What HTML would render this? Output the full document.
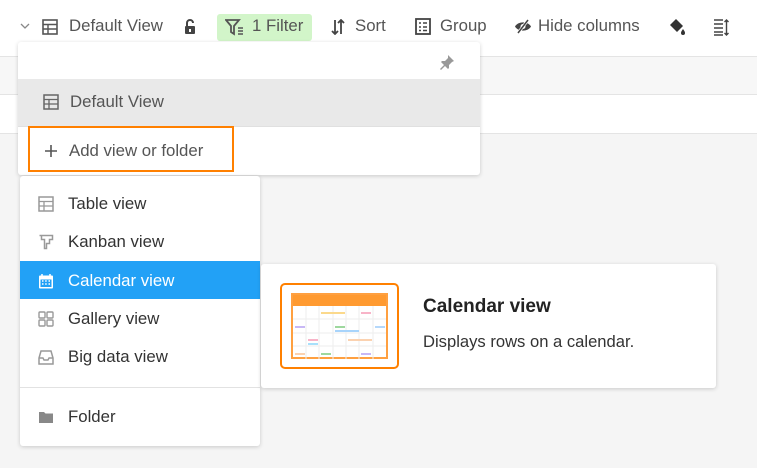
<!DOCTYPE html>
<html><head><meta charset="utf-8"><style>
*{box-sizing:border-box;margin:0;padding:0}
body{width:757px;height:468px;overflow:hidden;background:#f5f5f5;font-family:"Liberation Sans",sans-serif;position:relative;color:#333}
.abs{position:absolute}
.tb{top:0;left:0;width:757px;height:57px;background:#fff;border-bottom:1px solid #e4e4e4}
.t{position:absolute;top:16px;font-size:16.8px;color:#555;line-height:20px}
.r1{top:57px;left:0;width:757px;height:38px;background:#f7f7f7;border-bottom:1px solid #e4e4e4}
.r2{top:95px;left:0;width:757px;height:39px;background:#fff;border-bottom:1px solid #e4e4e4}
.dd{left:18px;top:42px;width:462px;height:133px;background:#fff;border-radius:3px;box-shadow:0 1px 4px rgba(0,0,0,.18)}
.menu{left:20px;top:176px;width:240px;height:270px;background:#fff;border-radius:3px;box-shadow:0 1px 4px rgba(0,0,0,.18)}
.mi{position:absolute;left:0;width:240px;height:38px;font-size:16.8px;line-height:40px;padding-left:48px;color:#333}
.mi svg{position:absolute;left:18px;top:12px}
.card{left:261px;top:264px;width:455px;height:124px;background:#fff;border-radius:3px;box-shadow:0 1px 4px rgba(0,0,0,.18)}
</style></head><body>
<div class="abs tb"></div>
<div class="abs r1"></div>
<div class="abs r2"></div>
<svg class="abs" style="left:20px;top:22px" width="10" height="8"><path d="M1 2l4 4 4-4" stroke="#888" fill="none" stroke-width="1.3"/></svg>
<svg class="abs" style="left:42px;top:19px" width="16" height="16"><rect x="1" y="1" width="14" height="14" fill="none" stroke="#555" stroke-width="1.6"/><path d="M1 5.5h14M1 10h14M6 5.5v9.5" stroke="#555" stroke-width="1.4"/></svg>
<div class="t" style="left:69px">Default View</div>
<svg class="abs" style="left:183px;top:18px" width="14" height="17"><path d="M4 8V5a3 3 0 0 1 6 0" stroke="#444" fill="none" stroke-width="2"/><rect x="2" y="8" width="10" height="8" rx="1" fill="#444"/><rect x="6" y="11" width="2" height="3" fill="#fff"/></svg>
<div class="abs" style="left:217px;top:14px;width:95px;height:27px;background:#d2f5c9;border-radius:3px"></div>
<svg class="abs" style="left:225px;top:19px" width="20" height="17"><path d="M1 1h13l-5 6v8l-3-2V7z" fill="none" stroke="#555" stroke-width="1.8"/><path d="M13 9h5M13 12h5M13 15h5" stroke="#555" stroke-width="1.6"/></svg>
<div class="t" style="left:252px">1 Filter</div>
<svg class="abs" style="left:331px;top:19px" width="14" height="16"><path d="M4 1v14M1 12l3 3 3-3M10 15V1M7 4l3-3 3 3" stroke="#444" fill="none" stroke-width="1.8"/></svg>
<div class="t" style="left:355px">Sort</div>
<svg class="abs" style="left:415px;top:18px" width="16" height="17"><rect x="1" y="1" width="14" height="15" fill="none" stroke="#444" stroke-width="1.8"/><path d="M4 5h2M8 5h4M4 9h2M8 9h4M4 12.5h2M8 12.5h4" stroke="#444" stroke-width="1.6"/></svg>
<div class="t" style="left:440px">Group</div>
<svg class="abs" style="left:514px;top:19px" width="18" height="15"><path d="M1 7.5C4 2 14 2 17 7.5 14 13 4 13 1 7.5z" fill="#444"/><circle cx="9" cy="7.5" r="2.5" fill="#fff"/><path d="M4 14L14 1" stroke="#fff" stroke-width="3"/><path d="M4 14L14 1" stroke="#444" stroke-width="1.5"/></svg>
<div class="t" style="left:538px">Hide columns</div>
<svg class="abs" style="left:668px;top:18px" width="19" height="18"><path d="M8 1l7 7-6 6-7-7z" fill="#333"/><path d="M15 11c-1.5 2-2 3-2 4a2 2 0 0 0 4 0c0-1-.5-2-2-4z" fill="#333"/></svg>
<svg class="abs" style="left:713px;top:19px" width="16" height="17"><path d="M1 1h9M1 5h9M1 9h9M1 13h9M1 16h9" stroke="#444" stroke-width="1.5"/><path d="M13.5 1v15M11.5 3l2-2 2 2M11.5 14l2 2 2-2" stroke="#444" fill="none" stroke-width="1.4"/></svg>

<div class="abs dd">
 <svg class="abs" style="left:421px;top:12px" width="16" height="16"><path d="M9 1l6 6-2 1-3 3 0 3-1 1-3-3-4 4-1-1 4-4-3-3 1-1h3l3-3z" fill="#999"/></svg>
 <div class="abs" style="left:0;top:37px;width:462px;height:47px;background:#e9e9e9"></div>
 <svg class="abs" style="left:25px;top:52px" width="16" height="16"><rect x="1" y="1" width="14" height="14" fill="none" stroke="#666" stroke-width="1.5"/><path d="M1 5.5h14M1 10h14M6 5.5v9.5" stroke="#666" stroke-width="1.3"/></svg>
 <div class="abs" style="left:52px;top:50px;font-size:16.8px;color:#555">Default View</div>
 <div class="abs" style="left:0;top:84px;width:462px;height:1px;background:#e0e0e0"></div>
 <div class="abs" style="left:10px;top:84px;width:206px;height:46px;border:2px solid #ff8000"></div>
 <svg class="abs" style="left:26px;top:102px" width="14" height="14"><path d="M7 1v12M1 7h12" stroke="#555" stroke-width="1.6"/></svg>
 <div class="abs" style="left:51px;top:99px;font-size:16.8px;color:#555">Add view or folder</div>
</div>

<div class="abs menu">
 <div class="mi" style="top:8px"><svg width="16" height="16"><rect x="1" y="1" width="14" height="14" fill="none" stroke="#999" stroke-width="1.5"/><path d="M1 5.5h14M1 10h14M6 5.5v9.5" stroke="#999" stroke-width="1.3"/></svg>Table view</div>
 <div class="mi" style="top:46px"><svg width="16" height="16"><path d="M1.5 1.5h13v4h-3v4h-3v5h-2v-9h-3v-4z" fill="none" stroke="#999" stroke-width="1.5"/></svg>Kanban view</div>
 <div class="mi" style="top:85px;background:#22a1f6;color:#fff"><svg width="16" height="16"><rect x="1" y="2.5" width="14" height="13" rx="1" fill="#fff"/><path d="M4 1v3M12 1v3" stroke="#fff" stroke-width="1.5"/><rect x="2.5" y="6.5" width="11" height="7.5" fill="#22a1f6"/><path d="M4 8h1.5M7.2 8h1.5M10.5 8h1.5M4 11h1.5M7.2 11h1.5M10.5 11h1.5" stroke="#fff" stroke-width="1.4"/></svg>Calendar view</div>
 <div class="mi" style="top:123px"><svg width="16" height="16"><rect x="1" y="1" width="6" height="6" rx="1" fill="none" stroke="#999" stroke-width="1.4"/><rect x="9" y="1" width="6" height="6" rx="1" fill="none" stroke="#999" stroke-width="1.4"/><rect x="1" y="9" width="6" height="6" rx="1" fill="none" stroke="#999" stroke-width="1.4"/><rect x="9" y="9" width="6" height="6" rx="1" fill="none" stroke="#999" stroke-width="1.4"/></svg>Gallery view</div>
 <div class="mi" style="top:161px"><svg width="16" height="16"><path d="M3 2h10l2 7v6H1V9z" fill="none" stroke="#999" stroke-width="1.5"/><path d="M1 9h4l1 2h4l1-2h4" fill="none" stroke="#999" stroke-width="1.4"/></svg>Big data view</div>
 <div class="abs" style="left:0;top:211px;width:240px;height:1px;background:#e2e2e2"></div>
 <div class="mi" style="top:221px"><svg width="16" height="16"><path d="M1 3h5l1.5 1.5H15V14H1z" fill="#888"/></svg>Folder</div>
</div>

<div class="abs card">
 <div class="abs" style="left:19px;top:19px;width:119px;height:86px;border:2px solid #ff8000;border-radius:5px"></div>
 <div class="abs" style="left:30px;top:29px;width:97px;height:66px;background:#fff;border:2px solid #ffa040">
  <div style="height:11px;background:#ff9a30"></div>
  <svg width="93" height="53" style="display:block"><g stroke="#eee" stroke-width="1"><path d="M13 0v53M26 0v53M40 0v53M53 0v53M66 0v53M80 0v53M0 13h93M0 27h93M0 40h93"/></g>
  <rect x="28" y="6" width="24" height="2" fill="#fbd98c"/><rect x="68" y="6" width="10" height="2" fill="#f8b4c8"/><rect x="2" y="20" width="10" height="2" fill="#c8b8f5"/><rect x="42" y="20" width="10" height="2" fill="#9ed89e"/><rect x="42" y="24" width="24" height="2" fill="#a8d4fb"/><rect x="82" y="20" width="10" height="2" fill="#b5d8fb"/><rect x="15" y="33" width="10" height="2" fill="#f8b4c8"/><rect x="15" y="37" width="10" height="2" fill="#a8e0fb"/><rect x="55" y="33" width="24" height="2" fill="#fbd2b0"/><rect x="2" y="47" width="10" height="2" fill="#fbd2b0"/><rect x="28" y="47" width="10" height="2" fill="#9ed89e"/><rect x="68" y="47" width="10" height="2" fill="#c8b8f5"/></svg>
 </div>
 <div class="abs" style="left:162px;top:32px;font-size:19px;font-weight:bold;color:#222">Calendar view</div>
 <div class="abs" style="left:162px;top:68px;font-size:16.6px;color:#333">Displays rows on a calendar.</div>
</div>
</body></html>
